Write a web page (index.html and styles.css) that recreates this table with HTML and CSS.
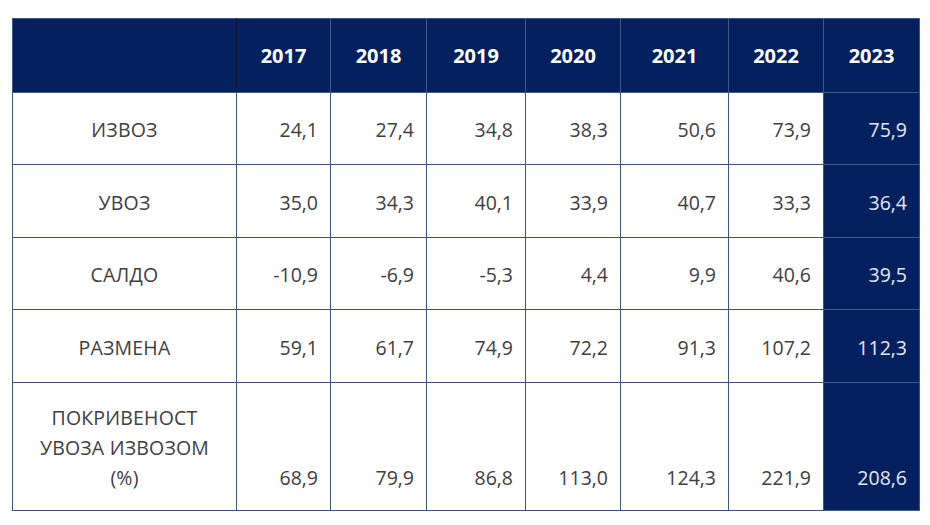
FILE: index.html
```html
<!DOCTYPE html>
<html lang="sr">
<head>
<meta charset="utf-8">
<title>Табела</title>
<link rel="stylesheet" href="styles.css">
</head>
<body>
<table class="data">
  <colgroup>
    <col class="c-label">
    <col class="c-94">
    <col class="c-96">
    <col class="c-99">
    <col class="c-95">
    <col class="c-108">
    <col class="c-95">
    <col class="c-96">
  </colgroup>
  <thead>
    <tr class="head-row">
      <th class="corner"></th>
      <th>2017</th>
      <th>2018</th>
      <th>2019</th>
      <th>2020</th>
      <th>2021</th>
      <th>2022</th>
      <th class="hl-head">2023</th>
    </tr>
  </thead>
  <tbody>
    <tr class="r72">
      <td class="label">ИЗВОЗ</td>
      <td>24,1</td><td>27,4</td><td>34,8</td><td>38,3</td><td>50,6</td><td>73,9</td><td class="hl">75,9</td>
    </tr>
    <tr class="r73">
      <td class="label">УВОЗ</td>
      <td>35,0</td><td>34,3</td><td>40,1</td><td>33,9</td><td>40,7</td><td>33,3</td><td class="hl">36,4</td>
    </tr>
    <tr class="r72">
      <td class="label">САЛДО</td>
      <td>-10,9</td><td>-6,9</td><td>-5,3</td><td>4,4</td><td>9,9</td><td>40,6</td><td class="hl">39,5</td>
    </tr>
    <tr class="r73">
      <td class="label">РАЗМЕНА</td>
      <td>59,1</td><td>61,7</td><td>74,9</td><td>72,2</td><td>91,3</td><td>107,2</td><td class="hl">112,3</td>
    </tr>
    <tr class="r-last">
      <td class="label">ПОКРИВЕНОСТ<br>УВОЗА ИЗВОЗОМ<br>(%)</td>
      <td>68,9</td><td>79,9</td><td>86,8</td><td>113,0</td><td>124,3</td><td>221,9</td><td class="hl">208,6</td>
    </tr>
  </tbody>
</table>
</body>
</html>
```

FILE: styles.css
```css
html, body {
  margin: 0;
  padding: 0;
  background: #ffffff;
}

body {
  padding: 18px 0 0 12px;
  font-family: "Open Sans", "Liberation Sans", sans-serif;
}

.data {
  border-collapse: collapse;
  table-layout: fixed;
  width: 908px;
  font-size: 19.5px;
  color: #404040;
}

.c-label { width: 224px; }
.c-94 { width: 94px; }
.c-96 { width: 96px; }
.c-99 { width: 99px; }
.c-95 { width: 95px; }
.c-108 { width: 108px; }

.data th,
.data td {
  border: 1px solid #3f5578;
  padding: 0 12px 0 0;
  box-sizing: border-box;
}

.head-row th {
  height: 74px;
  background: #04205f;
  color: #ffffff;
  font-size: 20px;
  font-weight: 700;
  text-align: center;
  padding: 0;
  border-color: #3f5b8c;
  vertical-align: middle;
}

.head-row th.corner {
  border-right-color: #0a1430;
}

.data td {
  text-align: right;
  vertical-align: middle;
  line-height: 30px;
}

.data td.label {
  text-align: center;
  padding-right: 0;
  letter-spacing: 0.2px;
}

.r72 td { height: 72px; padding-top: 3px; }
.r73 td { height: 73px; padding-top: 3px; }

.r-last td {
  height: 128px;
  vertical-align: bottom;
  padding-bottom: 17px;
}

.data td.hl {
  background: #04205f;
  color: #e4e7ef;
  border-bottom-color: #3f5b8c;
  border-top-color: #3f5b8c;
}
```
